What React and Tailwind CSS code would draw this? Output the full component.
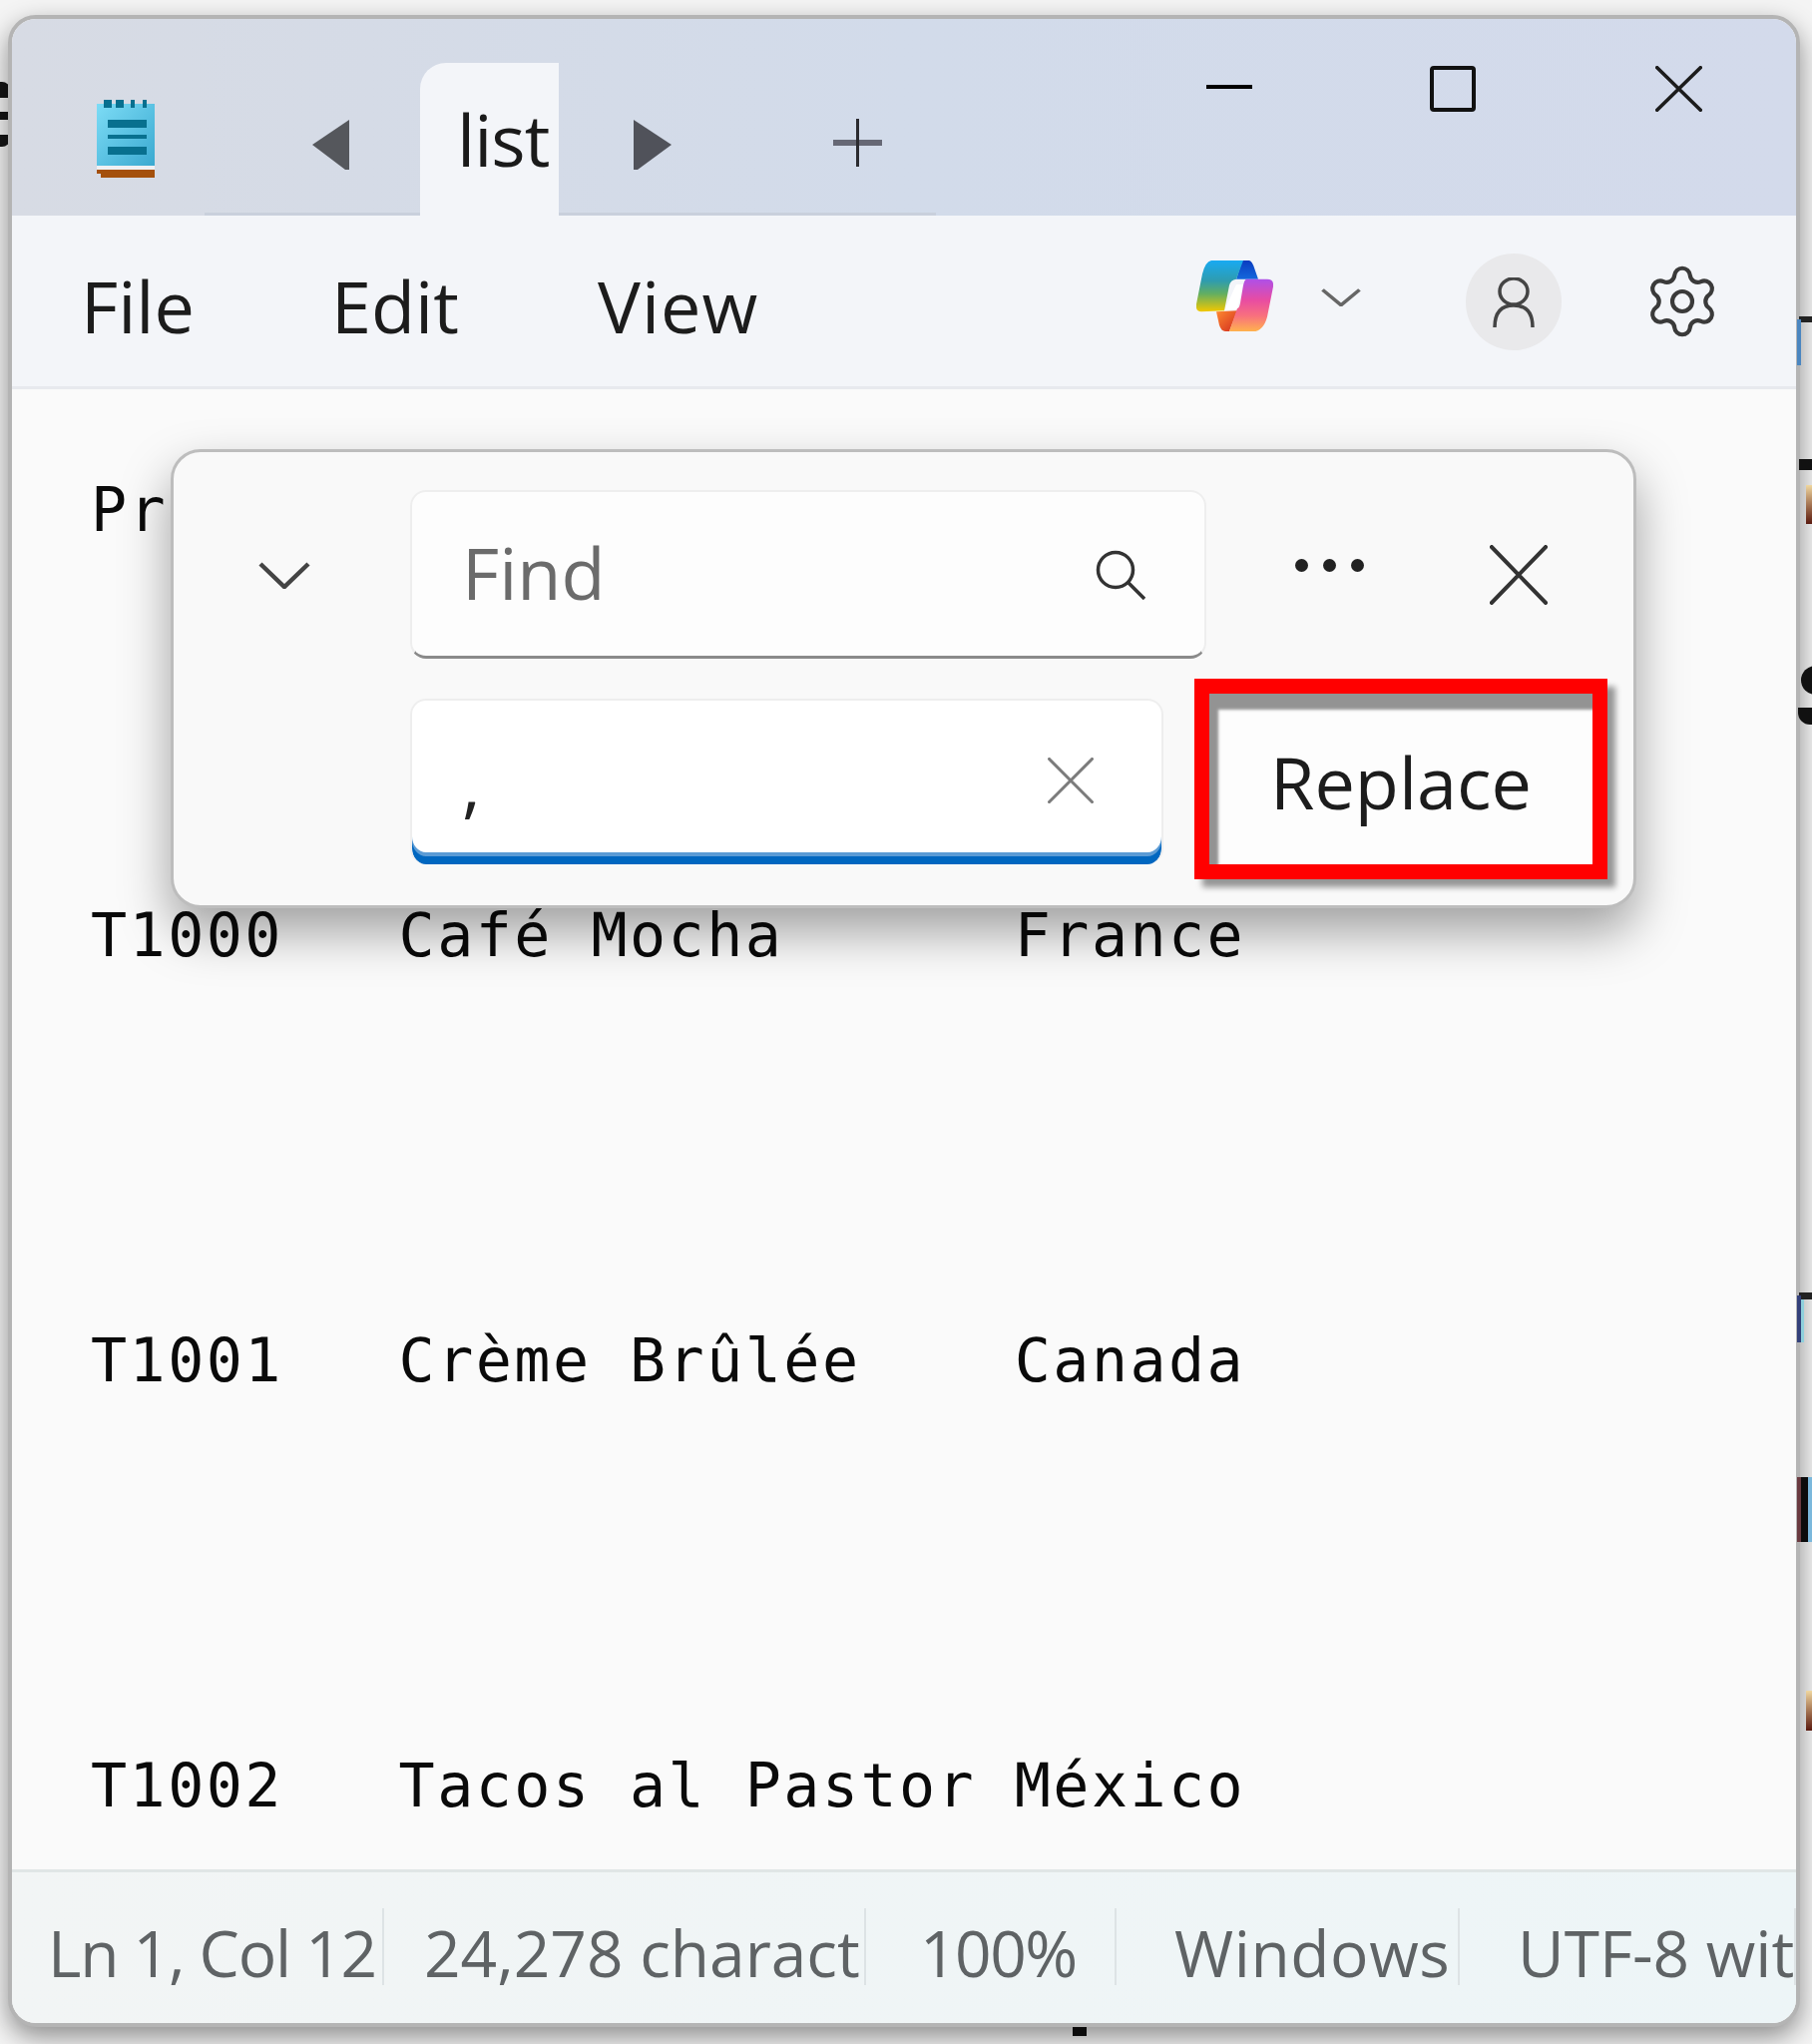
import { Settings } from 'lucide-react';

function XIcon({ className, stroke = '#333', width = 3 }) {
  return (
    <svg className={className} viewBox="0 0 100 100" preserveAspectRatio="none" fill="none">
      <path d="M1 1L99 99M99 1L1 99" stroke={stroke} strokeWidth={width} vectorEffect="non-scaling-stroke" />
    </svg>
  );
}

function Chevron({ className, stroke, width }) {
  return (
    <svg className={className} viewBox="0 0 52 27" preserveAspectRatio="none" fill="none">
      <path d="M2 2L26 25L50 2" stroke={stroke} strokeWidth={width} />
    </svg>
  );
}

function NotepadIcon() {
  return (
    <svg className="w-[58px] h-[78px] shrink-0" viewBox="0 0 58 78">
      <defs>
        <linearGradient id="pad" x1="0" y1="0" x2="1" y2="1">
          <stop offset="0" stopColor="#7ddcf6" />
          <stop offset="1" stopColor="#3aa9d0" />
        </linearGradient>
      </defs>
      <rect x="0" y="4" width="58" height="62" fill="url(#pad)" />
      <g fill="#08708f">
        <rect x="7" y="0" width="8" height="8" />
        <rect x="19" y="0" width="8" height="8" />
        <rect x="34" y="0" width="4" height="8" />
        <rect x="46" y="0" width="4" height="8" />
        <rect x="11" y="20" width="39" height="8" />
        <rect x="11" y="35" width="39" height="4" />
        <rect x="11" y="47" width="39" height="8" />
      </g>
      <rect x="0" y="66" width="58" height="4" fill="#eef0f3" />
      <path d="M0 70H58V78H4V74H0Z" fill="#a4500c" />
    </svg>
  );
}

function CopilotLogo() {
  return (
    <svg className="w-[77px] h-[72px] mb-[12px] shrink-0" viewBox="0 0 77 69" preserveAspectRatio="none">
      <defs>
        <linearGradient id="cpA" x1="0" y1="0" x2="0" y2="1">
          <stop offset="0" stopColor="#18aaf2" />
          <stop offset="0.4" stopColor="#2f9cae" />
          <stop offset="0.65" stopColor="#62ae62" />
          <stop offset="1" stopColor="#f2c800" />
        </linearGradient>
        <linearGradient id="cpB" x1="0" y1="0" x2="0" y2="1">
          <stop offset="0" stopColor="#ae50e8" />
          <stop offset="0.4" stopColor="#e84ca2" />
          <stop offset="0.7" stopColor="#f8707e" />
          <stop offset="1" stopColor="#ffb24e" />
        </linearGradient>
        <linearGradient id="cpC" x1="0" y1="0" x2="1" y2="1">
          <stop offset="0" stopColor="#ff8a30" />
          <stop offset="1" stopColor="#d22c20" />
        </linearGradient>
        <linearGradient id="cpD" x1="0" y1="0" x2="0" y2="1">
          <stop offset="0" stopColor="#0a3cc0" />
          <stop offset="1" stopColor="#1468dc" />
        </linearGradient>
      </defs>
      <path d="M40 24L47 24L41 48L28 49Z" fill="#fff" />
      <path d="M40 19L46 1L53 1Q56 2 58 8L62 19Z" fill="url(#cpD)" />
      <path d="M15 1L47 1L40 19Q34 20 33 25L28 49L5 50Q-1 50 0 43L6 14Q9 2 15 1Z" fill="url(#cpA)" />
      <path d="M20 50L41 49L33 69L29 69Q25 69 23 63Z" fill="url(#cpC)" />
      <path d="M50 19L71 19Q78 19 77 26L71 55Q67 69 57 69L33 69L41 47Q43 47 44 42L47 25Q48 20 50 19Z" fill="url(#cpB)" />
    </svg>
  );
}

function StatusCell({ className, children }) {
  return (
    <div className={`h-[77px] shrink-0 flex items-center whitespace-nowrap pt-[12px] text-[64px] leading-[65px] text-[#5f6365] border-r-2 border-[#dde3e5] ${className}`}>
      {children}
    </div>
  );
}

const rows = [
  'Product',
  'T1000   Café Mocha      France',
  'T1001   Crème Brûlée    Canada',
  'T1002   Tacos al Pastor México',
];

export default function App() {
  return (
    <div className="relative w-[1816px] h-[2048px] overflow-hidden bg-[#f4f4f4] pl-[8px] pt-[15px] font-['Open_Sans',sans-serif]">
      {/* Bits of the window behind, left edge */}
      <div className="absolute left-0 top-[82px] w-[10px] h-[16px] rounded-tr-[8px] bg-[#151515]" />
      <div className="absolute left-0 top-[112px] w-[10px] h-[8px] bg-[#151515]" />
      <div className="absolute left-0 top-[135px] w-[10px] h-[12px] rounded-br-[8px] bg-[#151515]" />
      <div className="absolute left-[1075px] top-[2030px] w-[14px] h-[10px] bg-[#111]" />

      {/* Notepad window */}
      <div className="relative w-[1796px] h-[2016px] flex flex-col overflow-hidden rounded-[28px] border-[4px] border-[#b4b4b4] bg-[#fafafa] shadow-[0_10px_26px_rgba(0,0,0,0.42)]">
        {/* Tab strip */}
        <div className="h-[197px] shrink-0 flex bg-gradient-to-r from-[#d7dbe4] via-[#d2dbea] to-[#d3daeb]">
          <div className="w-[193px] shrink-0 pl-[85px] pt-[81px]">
            <NotepadIcon />
          </div>
          <div className="w-[216px] shrink-0 pl-[108px] pt-[101px] border-b-[3px] border-[#c9d0dc]">
            <svg className="w-[37px] h-[50px]" viewBox="0 0 37 50">
              <path d="M37 0V50H33L0 25Z" fill="#55575c" />
            </svg>
          </div>
          <div className="w-[139px] shrink-0 mt-[44px] pl-[37px] pt-[27px] rounded-tl-[26px] bg-[#f3f5f9] text-[72px] leading-[98px] tracking-[-1px] text-[#1a1a1a]">
            list
          </div>
          <div className="w-[378px] shrink-0 flex items-start pl-[75px] pt-[101px] border-b-[3px] border-[#c9d0dc]">
            <svg className="w-[38px] h-[50px] shrink-0" viewBox="0 0 38 50">
              <path d="M0 0V50H4L38 25Z" fill="#50525a" />
            </svg>
            <svg className="w-[49px] h-[48px] shrink-0 ml-[162px] -mt-[1px]" viewBox="0 0 49 48">
              <rect x="0" y="21" width="49" height="6" fill="#666875" />
              <rect x="23" y="0" width="3" height="48" fill="#2b2b30" />
            </svg>
          </div>
          <div className="flex-1 flex items-start pl-[271px] pt-[47px]">
            <div className="w-[46px] h-[4px] mt-[19px] shrink-0 bg-black" />
            <div className="w-[46px] h-[46px] ml-[178px] shrink-0 rounded-[4px] border-[4px] border-[#111]" />
            <XIcon className="w-[47px] h-[46px] ml-[180px] shrink-0" stroke="#1c1c1c" width={3.5} />
          </div>
        </div>

        {/* Menu bar */}
        <div className="h-[174px] shrink-0 flex items-center pl-[69px] border-b-[3px] border-[#e7e9ee] bg-[#f3f5f9] text-[72px] text-[#1c1c1c]">
          <div className="w-[251px] mt-[8px] shrink-0">File</div>
          <div className="w-[267px] mt-[8px] shrink-0">Edit</div>
          <div className="mt-[8px] tracking-[1px]">View</div>
          <div className="ml-auto flex items-center pr-[74px]">
            <CopilotLogo />
            <Chevron className="w-[40px] h-[18px] ml-[48px] mb-[8px] shrink-0" stroke="#666" width={5} />
            <div className="w-[96px] h-[97px] ml-[105px] mt-[2px] shrink-0 flex items-center justify-center rounded-full bg-[#e9e9eb]">
              <svg className="w-[42px] h-[50px]" viewBox="0 0 42 50" fill="none" stroke="#444" strokeWidth="3.5">
                <ellipse cx="21" cy="14" rx="14" ry="13" />
                <path d="M2 50Q2 28 21 28Q40 28 40 50" />
              </svg>
            </div>
            <Settings className="w-[80px] h-[80px] ml-[81px] shrink-0 text-[#3a3a3a]" strokeWidth={1.25} />
          </div>
        </div>

        {/* Document text */}
        <div className="flex-1 flex flex-col gap-[360px] pt-[88px] pl-[79px] font-['DejaVu_Sans_Mono',monospace] text-[60px] leading-[66px] tracking-[2.45px] whitespace-pre text-[#0a0a0a]">
          {rows.map((row) => (
            <div key={row} className="h-[66px]">{row}</div>
          ))}
        </div>

        {/* Status bar */}
        <div className="h-[154px] shrink-0 flex pt-[36px] border-t-[3px] border-[#e0e6e6] bg-gradient-to-r from-[#f2f5f5] to-[#edf5f7]">
          <StatusCell className="w-[373px] pl-[36px] tracking-[-1.25px]">Ln 1, Col 12</StatusCell>
          <StatusCell className="w-[483px] pl-[40px]">24,278 charact</StatusCell>
          <StatusCell className="w-[251px] pl-[54px] tracking-[-1.5px]">100%</StatusCell>
          <StatusCell className="w-[344px] pl-[58px] tracking-[0.6px]">Windows</StatusCell>
          <StatusCell className="flex-1 border-r-0 pl-[58px]">UTF-8 wit</StatusCell>
        </div>

        {/* Find and replace panel, floats over the text */}
        <div className="absolute left-[159px] top-[431px] w-[1469px] h-[460px] rounded-[30px] border-[3px] border-[#bdbdbd] bg-[#f9f9f9] shadow-[0_24px_50px_rgba(0,0,0,0.36)] font-['Open_Sans',sans-serif]">
          <div className="flex items-start pt-[38px]">
            <Chevron className="w-[52px] h-[27px] ml-[85px] mr-[100px] mt-[72px] shrink-0" stroke="#444" width={4.5} />
            <div className="w-[798px] h-[169px] shrink-0 flex items-center justify-between pl-[50px] pr-[59px] pb-[4px] rounded-[16px] border-2 border-b-[3px] border-[#eeeeee] border-b-[#8a8a8a] bg-[#fdfdfd] text-[72px] text-[#6b6b6b]">
              <span>Find</span>
              <svg className="w-[50px] h-[50px] mt-[6px]" viewBox="0 0 50 50" fill="none" stroke="#333" strokeWidth="3.5">
                <circle cx="20" cy="20" r="17.5" />
                <path d="M32 32L49 49" />
              </svg>
            </div>
            <div className="w-[69px] ml-[89px] mt-[69px] shrink-0 flex justify-between">
              <div className="w-[13px] h-[13px] rounded-full bg-[#222]" />
              <div className="w-[13px] h-[13px] rounded-full bg-[#222]" />
              <div className="w-[13px] h-[13px] rounded-full bg-[#222]" />
            </div>
            <XIcon className="w-[58px] h-[60px] ml-[126px] mt-[55px] shrink-0" stroke="#333" width={4} />
          </div>

          <div className="flex items-start pl-[237px]">
            <div className="w-[755px] h-[166px] mt-[40px] shrink-0 flex items-center justify-between pl-[50px] pr-[68px] rounded-[16px] border-2 border-b-0 border-[#eeeeee] bg-white shadow-[inset_0_-8px_0_#0067c0,inset_0_-12px_0_#5b9bd5] text-[72px] text-[#222]">
              <span>,</span>
              <XIcon className="w-[46px] h-[46px] mt-[-4px]" stroke="#7b7b7b" width={3} />
            </div>
            <div className="w-[414px] h-[201px] ml-[31px] mt-[20px] shrink-0 border-[15px] border-[#ff0000] bg-[#fdfdfd] shadow-[8px_8px_6px_rgba(0,0,0,0.4),inset_9px_16px_3px_rgba(0,0,0,0.42)] flex items-center justify-center pt-[4px] text-[72px] text-[#1c1c1c]">
              Replace
            </div>
          </div>
        </div>
      </div>

      {/* Bits of the window behind, right edge, they bleed over the border */}
      <div className="absolute left-[1803px] top-[317px] w-[13px] h-[6px] bg-[#222]" />
      <div className="absolute left-[1801px] top-[320px] w-[4px] h-[46px] bg-[#4a86c0]" />
      <div className="absolute left-[1803px] top-[460px] w-[13px] h-[11px] bg-[#111]" />
      <div className="absolute left-[1810px] top-[486px] w-[6px] h-[39px] bg-gradient-to-b from-[#f0d8a0] to-[#5a1a10]" />
      <div className="absolute left-[1805px] top-[667px] w-[16px] h-[29px] rounded-l-full bg-[#111]" />
      <div className="absolute left-[1802px] top-[709px] w-[14px] h-[17px] rounded-bl-[12px] bg-[#111]" />
      <div className="absolute left-[1803px] top-[1295px] w-[13px] h-[7px] bg-[#222]" />
      <div className="absolute left-[1801px] top-[1298px] w-[4px] h-[47px] bg-[#33407a]" />
      <div className="absolute left-[1805px] top-[1302px] w-[3px] h-[43px] bg-[#8fd0dc]" />
      <div className="absolute left-[1801px] top-[1480px] w-[4px] h-[65px] bg-[#6a3a40]" />
      <div className="absolute left-[1805px] top-[1480px] w-[7px] h-[65px] bg-[#0c0c0c]" />
      <div className="absolute left-[1812px] top-[1480px] w-[4px] h-[65px] bg-[#7bb8dc]" />
      <div className="absolute left-[1810px] top-[1694px] w-[6px] h-[40px] bg-gradient-to-b from-[#f0d8a0] to-[#5a1a10]" />
    </div>
  );
}
